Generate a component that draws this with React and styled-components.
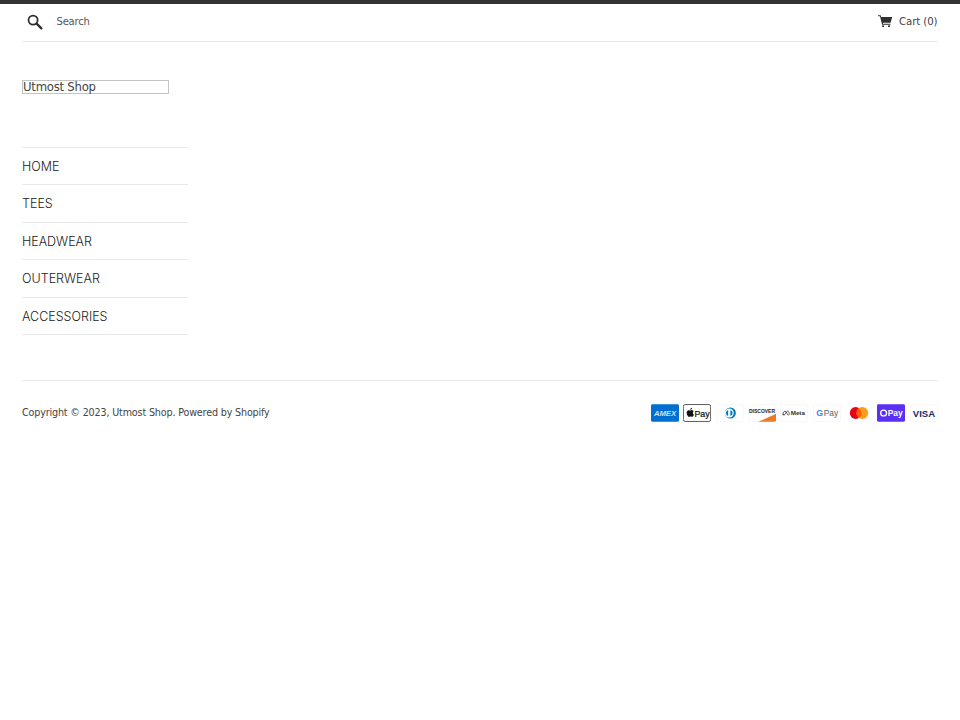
import React from 'react'
import styled, { createGlobalStyle } from 'styled-components'

const menu = ['HOME', 'TEES', 'HEADWEAR', 'OUTERWEAR', 'ACCESSORIES']

const App = () => {
    return (
        <Page>
            <GlobalStyle />
            <TopBar>
                <SearchForm>
                    <SearchIcon viewBox="0 0 20 20">
                        <circle cx="7.6" cy="7.6" r="5.7" fill="none" stroke="#2e2e2e" strokeWidth="2.2" />
                        <path d="M12 12 L18 18" stroke="#2e2e2e" strokeWidth="2.8" strokeLinecap="round" />
                    </SearchIcon>
                    <SearchText>Search</SearchText>
                </SearchForm>
                <Cart>
                    <CartIcon viewBox="0 0 16 14">
                        <path d="M0 .4h2.800l.6 1.800H15.800l-1.800 6.600H5.300l.3 1h8.200v1.100H4.500L2.100 1.500H0z" fill="#2e2e2e" />
                        <circle cx="5.600" cy="12.700" r="1.200" fill="#2e2e2e" />
                        <circle cx="12.200" cy="12.700" r="1.200" fill="#2e2e2e" />
                    </CartIcon>
                    Cart (0)
                </Cart>
            </TopBar>

            <Columns>
                <Sidebar>
                    <Logo>Utmost Shop</Logo>
                    <Nav>
                        {menu.map((item) => (
                            <NavItem key={item}>{item}</NavItem>
                        ))}
                    </Nav>
                </Sidebar>
            </Columns>

            <Footer>
                <Copyright>Copyright © 2023, Utmost Shop. Powered by Shopify</Copyright>
                <Payments>
                    <PayIcon viewBox="0 0 38 24">
                        <rect width="38" height="24" rx="2" fill="#016fd0" />
                        <text x="19" y="16" textAnchor="middle" fontFamily="Liberation Sans, sans-serif" fontSize="10.500" fontWeight="700" fontStyle="italic" fill="#cfe3f7" textLength="30" lengthAdjust="spacingAndGlyphs">AMEX</text>
                    </PayIcon>
                    <PayIcon viewBox="0 0 38 24">
                        <rect x=".5" y=".5" width="37" height="23" rx="2.500" fill="#fff" stroke="#222" />
                        <path d="M11.600 7c.5-.6.800-1.300.7-2-.7 0-1.400.4-1.800 1-.4.5-.7 1.200-.6 1.900.7 0 1.300-.4 1.700-.9zM12.300 8.100c-1-.1-1.800.6-2.300.6s-1.200-.6-2-.6c-1 0-2 .6-2.500 1.500-1.100 1.900-.3 4.700.8 6.200.5.800 1.100 1.600 1.900 1.500.8 0 1-.5 2-.5s1.200.5 2 .5 1.300-.7 1.800-1.500c.6-.8.800-1.600.8-1.700-1.800-.8-2-3.500-.2-4.500-.5-.9-1.500-1.400-2.300-1.500z" fill="#111" />
                        <text x="15.500" y="16.800" fontFamily="Liberation Sans, sans-serif" fontSize="12" fill="#111" stroke="#111" strokeWidth=".3">Pay</text>
                    </PayIcon>
                    <PayIcon viewBox="0 0 38 24">
                        <rect x=".5" y=".5" width="37" height="23" rx="2" fill="#fff" stroke="#f4f4f4" />
                        <circle cx="19.500" cy="12" r="7.500" fill="#0079be" />
                        <circle cx="18" cy="12" r="6" fill="#fff" />
                        <path d="M16.500 7.800v8.400a4.400 4.400 0 0 1 0-8.400zM19.500 7.800v8.400a4.400 4.400 0 0 0 0-8.400z" fill="#0079be" />
                    </PayIcon>
                    <PayIcon viewBox="0 0 38 24">
                        <rect x=".5" y=".5" width="37" height="23" rx="2" fill="#fff" stroke="#f4f4f4" />
                        <path d="M14 24 L38 13 V22 a2 2 0 0 1 -2 2z" fill="#ee7a22" />
                        <text x="19" y="12" textAnchor="middle" fontFamily="Liberation Sans, sans-serif" fontSize="6.800" fontWeight="700" fill="#222">DISCOVER</text>
                    </PayIcon>
                    <PayIcon viewBox="0 0 38 24">
                        <rect x=".5" y=".5" width="37" height="23" rx="2" fill="#fff" stroke="#f4f4f4" />
                        <path d="M4 15c0-3 1.200-5.500 2.800-5.500 1.900 0 3.200 5.500 4.400 5.500.9 0 1.300-1 1.300-2.200 0-2-1-3.300-2.300-3.300-1.900 0-3.200 5.500-4.700 5.500-.9 0-1.500-.9-1.500-2" fill="none" stroke="#333" strokeWidth="1.100" />
                        <text x="14.500" y="15.200" fontFamily="Liberation Sans, sans-serif" fontSize="8.500" fontWeight="700" fill="#333">Meta</text>
                    </PayIcon>
                    <PayIcon viewBox="0 0 38 24">
                        <rect x=".5" y=".5" width="37" height="23" rx="2" fill="#fff" stroke="#f4f4f4" />
                        <text x="4.500" y="16.200" fontFamily="Liberation Sans, sans-serif" fontSize="12" fontWeight="700" fill="#4285f4">G</text>
                        <text x="14.500" y="16.200" fontFamily="Liberation Sans, sans-serif" fontSize="11.500" fill="#5f6368">Pay</text>
                    </PayIcon>
                    <PayIcon viewBox="0 0 38 24">
                        <rect width="38" height="24" rx="2" fill="#fff" />
                        <circle cx="14.500" cy="12" r="8" fill="#eb001b" />
                        <circle cx="23.500" cy="12" r="8" fill="#f79e1b" />
                        <path d="M19 5.400a8 8 0 0 1 0 13.200 8 8 0 0 1 0-13.200z" fill="#ff5f00" />
                    </PayIcon>
                    <PayIcon viewBox="0 0 38 24">
                        <rect width="38" height="24" rx="2" fill="#5a31f4" />
                        <circle cx="9" cy="12" r="4" fill="none" stroke="#fff" strokeWidth="1.800" />
                        <text x="14.500" y="16.300" fontFamily="Liberation Sans, sans-serif" fontSize="11.500" fontWeight="700" fill="#fff">Pay</text>
                    </PayIcon>
                    <PayIcon viewBox="0 0 38 24">
                        <rect x=".5" y=".5" width="37" height="23" rx="2" fill="#fff" stroke="#f4f4f4" />
                        <text x="19" y="16.800" textAnchor="middle" fontFamily="Liberation Sans, sans-serif" fontSize="13" fontWeight="700" fill="#1a2a6c">VISA</text>
                    </PayIcon>
                </Payments>
            </Footer>
        </Page>
    )
}

export default App

const GlobalStyle = createGlobalStyle`
    body {
        margin: 0;
        background: #fff;
        color: #333;
        font-family: "DejaVu Sans", sans-serif;
    }
`

const Page = styled.div`
    min-height: 720px;
    border-top: 4px solid #333;
    padding: 0 22.5px 0 22px;
    box-sizing: border-box;
`

const TopBar = styled.header`
    display: flex;
    align-items: center;
    justify-content: space-between;
    height: 34px;
    padding-bottom: 3px;
    border-bottom: 1px solid #e9e9e9;
`

const SearchForm = styled.div`
    display: flex;
    align-items: center;
`

const SearchIcon = styled.svg`
    width: 16px;
    height: 16px;
    margin-left: 4.500px;
    margin-top: 1px;
`

const SearchText = styled.span`
    margin-left: 14px;
    font-size: 10px;
    letter-spacing: -0.2px;
    color: #555;
`

const Cart = styled.div`
    display: flex;
    align-items: center;
    font-size: 10.200px;
    letter-spacing: -0.1px;
    color: #444;
`

const CartIcon = styled.svg`
    width: 14.500px;
    height: 12.500px;
    margin-right: 7px;
`

const Columns = styled.div`
    display: flex;
`

const Sidebar = styled.aside`
    width: 166px;
    padding-top: 38px;
`

const Logo = styled.div`
    width: 145px;
    height: 12px;
    border: 1px solid #c4c4c4;
    font-size: 11.700px;
    letter-spacing: -0.25px;
    line-height: 13px;
    color: #444;
    white-space: nowrap;
`

const Nav = styled.nav`
    margin-top: 52.500px;
    border-top: 1px solid #e9e9e9;
`

const NavItem = styled.div`
    height: 36.500px;
    line-height: 37.500px;
    border-bottom: 1px solid #e9e9e9;
    font-family: "Inter", sans-serif;
    font-weight: 280;
    font-size: 12.500px;
    color: #222;
`

const Footer = styled.footer`
    display: flex;
    align-items: center;
    justify-content: space-between;
    margin-top: 45px;
    padding-top: 23px;
    border-top: 1px solid #e9e9e9;
`

const Copyright = styled.div`
    font-size: 9.600px;
    letter-spacing: -0.16px;
    padding-bottom: 2px;
    color: #444;
`

const Payments = styled.div`
    display: flex;
    gap: 4.300px;
`

const PayIcon = styled.svg`
    display: block;
    width: 28px;
    height: 18px;
`
